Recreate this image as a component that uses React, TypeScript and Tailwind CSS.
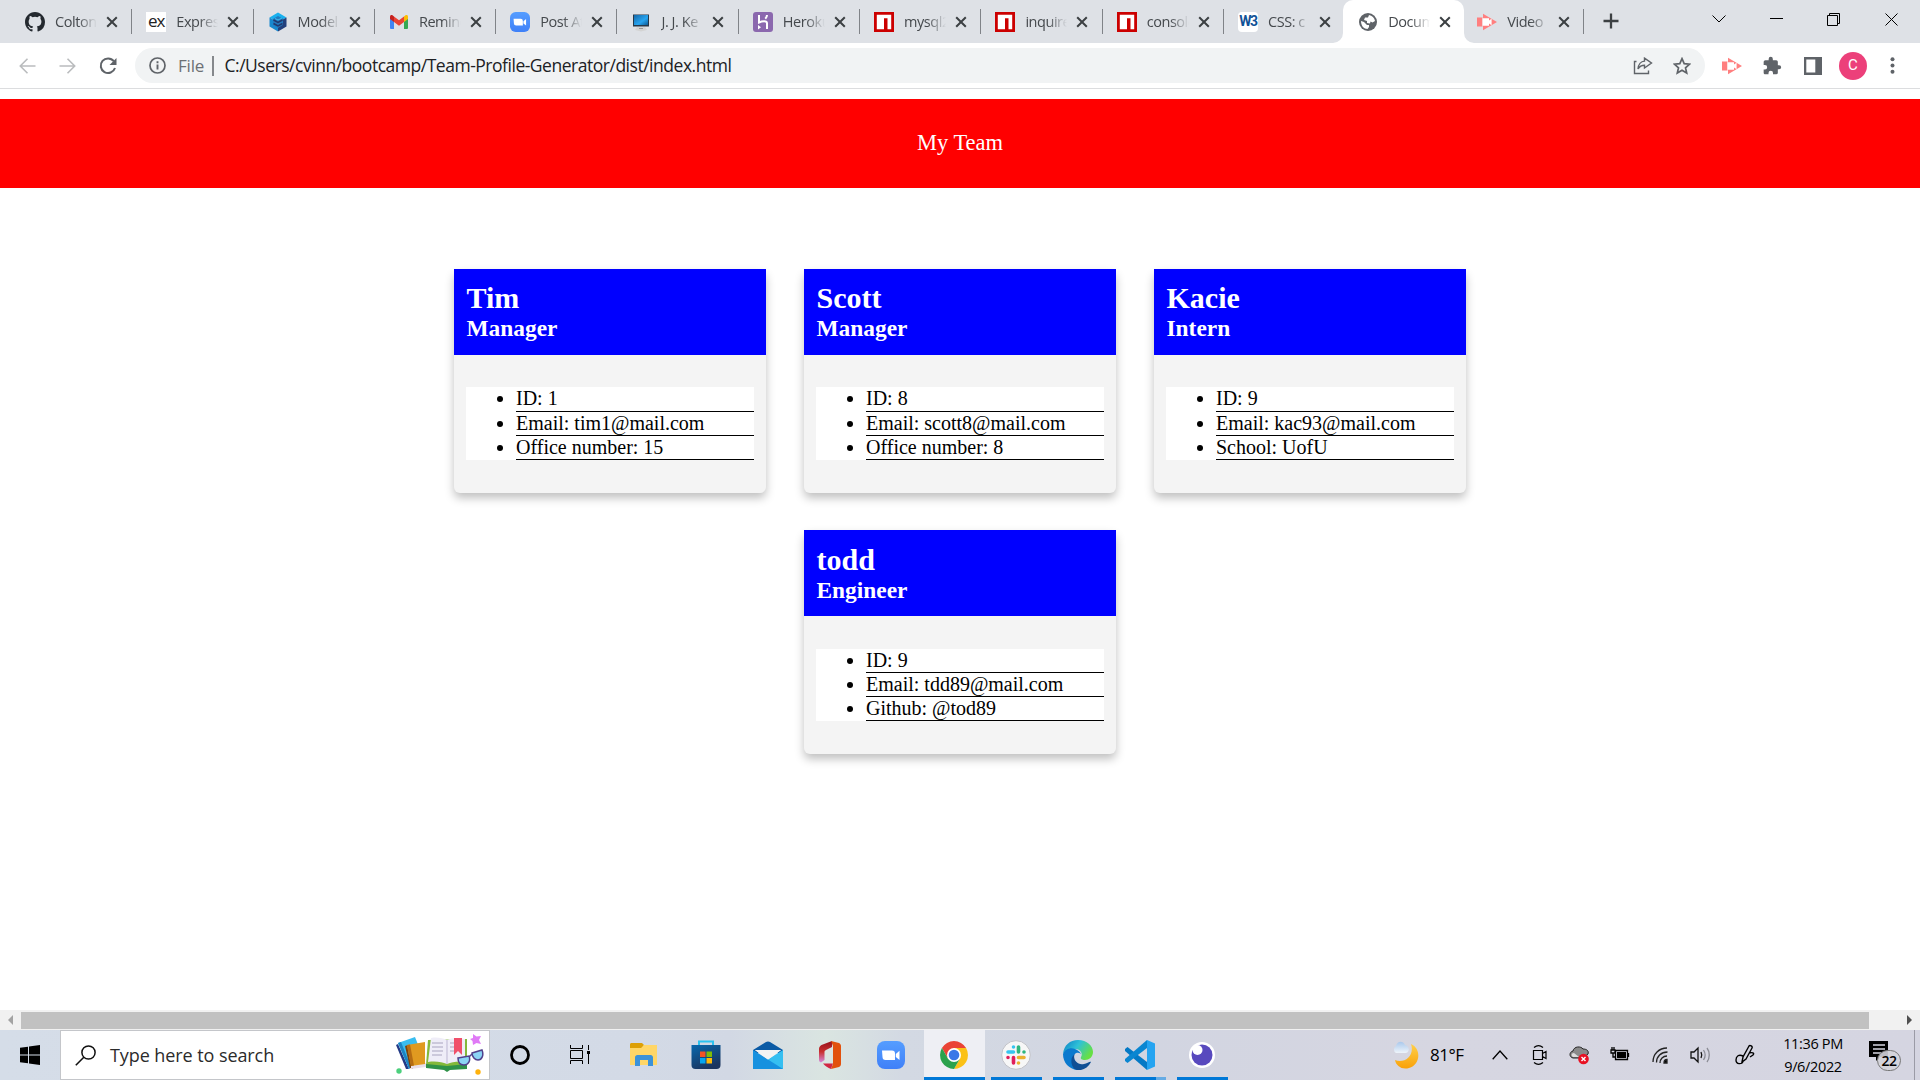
import React from "react";

const NpmIcon = () => (
  <svg width="20" height="20" viewBox="0 0 20 20"><path fill="#c00" d="M0 0h20v20H0z" /><path fill="#fff" d="M2.800 2.800h14.400v14.400h-3.700V6.300H10v10.900H2.800z" /></svg>
);
const ZoomIcon = ({ size }: { size: number }) => (
  <svg width={size} height={size} viewBox="0 0 28 28">
    <defs><linearGradient id="zm" x1="0" y1="0" x2="0" y2="1"><stop stopColor="#559dff" /><stop offset="1" stopColor="#3f80f8" /></linearGradient></defs>
    <rect width="28" height="28" rx="8" fill="url(#zm)" />
    <path fill="#fff" d="M5 9.500h10a3 3 0 0 1 3 3v6.500H8.500a3 3 0 0 1-3-3zM18.800 13l3.700-3.200v9.200l-3.700-3z" />
  </svg>
);
const CastifyIcon = () => (
  <svg width="20" height="18" viewBox="0 0 20 18">
    <path fill="#ff7f7f" d="M0 4.500h5.500v9H0zM6 .8l14 8.200-14 8.200z" /><path fill="#fff" d="M5.500 5.200H12v2.300l2.600-1.800v6.600L12 10.500v2.300H5.500z" />
  </svg>
);

const tabs: { title: string; icon: React.ReactNode; active?: boolean }[] = [
  { title: "Colton", icon: <svg width="20" height="20" viewBox="0 0 16 16"><path fill="#24292f" d="M8 0C3.580 0 0 3.580 0 8c0 3.540 2.290 6.530 5.470 7.590.4.070.55-.17.55-.38 0-.19-.01-.82-.01-1.490-2.010.37-2.530-.49-2.690-.94-.09-.23-.48-.94-.82-1.130-.28-.15-.68-.52-.01-.53.63-.01 1.080.58 1.230.82.72 1.210 1.870.87 2.330.66.07-.52.28-.87.51-1.070-1.780-.2-3.640-.89-3.640-3.950 0-.87.31-1.590.82-2.150-.08-.2-.36-1.020.08-2.120 0 0 .67-.21 2.200.82a7.600 7.600 0 0 1 4 0c1.530-1.040 2.200-.82 2.200-.82.44 1.100.16 1.920.08 2.120.51.56.82 1.270.82 2.150 0 3.070-1.870 3.750-3.650 3.950.29.25.54.73.54 1.480 0 1.070-.01 1.930-.01 2.200 0 .21.15.46.55.38A8 8 0 0 0 16 8c0-4.420-3.580-8-8-8z" /></svg> },
  { title: "Express", icon: <span className="flex h-5 w-5 items-center justify-center bg-white pb-0.5 text-[17px] tracking-[-1px] text-[#222]">ex</span> },
  { title: "Model ", icon: <svg width="20" height="20" viewBox="0 0 20 20"><path fill="#18b0ee" d="M10 .5l8.500 5L10 10 1.500 5.500z" /><path fill="#1888ce" d="M1.500 5.500L10 10v9.500l-8.500-5z" /><path fill="#23407c" d="M18.500 5.500L10 10v9.500l8.500-5z" /><path fill="#2379bd" d="M10 4l5 2.800v6L10 16l-5-3V7z" /><path fill="none" stroke="#22386e" strokeWidth="1.500" d="M5.500 8l4.500 2.500L14.500 8M5.500 11.500L10 14l4.500-2.500" /><path fill="none" stroke="#3dbdf2" d="M7 6.500l3 1.500 4-2" /></svg> },
  { title: "Remind", icon: <svg width="20" height="20" viewBox="0 0 20 20"><path fill="#4285f4" d="M1 5l4 3v9H2a1 1 0 0 1-1-1z" /><path fill="#34a853" d="M19 5l-4 3v9h3a1 1 0 0 0 1-1z" /><path fill="#fbbc04" d="M15 4.500l1.500-1.200C17.700 2.500 19 3.200 19 4.800V7l-4 3z" /><path fill="#c5221f" d="M5 4.500L3.500 3.300C2.300 2.500 1 3.200 1 4.800V7l4 3z" /><path fill="#ea4335" d="M5 4.500L10 8.300l5-3.800V10l-5 3.800L5 10z" /></svg> },
  { title: "Post At", icon: <ZoomIcon size={20} /> },
  { title: "J. J. Ke", icon: <svg width="20" height="20" viewBox="0 0 20 20"><defs><linearGradient id="mon" x1="0" y1="0" x2="1" y2="1"><stop stopColor="#1568a8" /><stop offset=".6" stopColor="#27a4f0" /><stop offset="1" stopColor="#0c5a95" /></linearGradient></defs><rect x="2" y="2.500" width="16" height="12" fill="#263848" /><path fill="url(#mon)" d="M3 3h14v10H3z" /><path fill="#d4d4d4" d="M6 15h8l2 3-6 1.500L4 18z" /><path fill="#999" d="M8 16h4v1H8z" /></svg> },
  { title: "Heroku", icon: <svg width="20" height="20" viewBox="0 0 20 20"><rect width="20" height="20" rx="3" fill="#8b68ae" /><path fill="none" stroke="#fff" strokeWidth="2" d="M6 3v7.500c3-1.300 8-2 8 .8V17M14 3c0 1.500-.7 2.800-1.700 3.800" /><path fill="#fff" d="M5 13l3 2.300L5 17.500z" /></svg> },
  { title: "mysql2", icon: <NpmIcon /> },
  { title: "inquirer", icon: <NpmIcon /> },
  { title: "console", icon: <NpmIcon /> },
  { title: "CSS: c", icon: <span className="flex h-5 w-5 items-center justify-center rounded-sm bg-white font-['Roboto'] text-[14px] font-bold tracking-[-1.500px] text-[#115297]">W3</span> },
  { title: "Docum", active: true, icon: <svg width="20" height="20" viewBox="0 0 20 20"><circle cx="10" cy="10" r="9" fill="#5f6368" /><path fill="#fff" d="M11 3c3 .5 5.500 3 6 6l-2.500 1.500-2-1-.5 2-3-.5V9l-3-1 1-2.500h3zM3 9l3 1 3 3h2v2l-1.500 2C6 17 3 14 3 9z" /></svg> },
  { title: "Video ", icon: <CastifyIcon /> },
];

const Tab = ({ title, icon, active, bar, last }: { title: string; icon: React.ReactNode; active?: boolean; bar: boolean; last: boolean }) => (
  <div
    className={
      active
        ? "relative -ml-px flex h-[43px] w-[121px] shrink-0 items-center rounded-t-[10px] bg-white pl-[15px]"
        : last
          ? "relative -ml-px flex h-[43px] w-[119.500px] shrink-0 items-center pl-[14px]"
          : "relative flex h-[43px] w-[121.300px] shrink-0 items-center pl-[15px]"
    }
  >
    <span className="flex h-5 w-5 shrink-0 items-center justify-center">{icon}</span>
    <span className="ml-[10px] w-[42px] shrink-0 overflow-hidden whitespace-pre text-[14.500px] tracking-[-0.45px] text-[#45494d] [mask-image:linear-gradient(to_right,black_55%,transparent)]">{title}</span>
    <svg className="ml-[9px] shrink-0" width="12" height="12" viewBox="0 0 12 12"><path d="M1.200 1.200l9.600 9.600M10.800 1.200l-9.600 9.600" stroke="#3c4043" strokeWidth="2" /></svg>
    {bar && <span className="absolute right-[-1px] top-[9px] h-[25px] w-px bg-[#808388]" />}
    {active && (
      <>
        <svg className="absolute bottom-0 -left-[10px]" width="10" height="10"><path d="M10 0v10H0A10 10 0 0 0 10 0" fill="#fff" /></svg>
        <svg className="absolute bottom-0 -right-[10px]" width="10" height="10"><path d="M0 0v10h10A10 10 0 0 1 0 0" fill="#fff" /></svg>
      </>
    )}
  </div>
);

const Card = ({ name, role, items, lower }: { name: string; role: string; items: string[]; lower?: boolean }) => (
  <article className="h-[224px] w-[312px] rounded-[6px] bg-[#f4f4f4] shadow-[0_5px_10px_rgba(0,0,0,0.25)]">
    <header className={"h-[86px] bg-[#0000ff] px-[12.500px] font-bold text-white " + (lower ? "pt-[13px]" : "pt-[12px]")}>
      <h2 className="text-[30px] leading-[34px]">{name}</h2>
      <h3 className="text-[23.400px] leading-[27px]">{role}</h3>
    </header>
    <ul className={"mx-3 list-disc bg-white pl-[50px] text-[20px] leading-[23px] text-black " + (lower ? "mt-[33px]" : "mt-8")}>
      {items.map((t) => <li key={t} className={lower ? "border-b border-black" : "border-b border-black first:pb-px"}>{t}</li>)}
    </ul>
  </article>
);

const TaskItem = ({ children, w, line }: { children: React.ReactNode; w: string; line?: React.ReactNode }) => (
  <div className={"relative flex h-[50px] shrink-0 items-center justify-center " + w}>{children}{line}</div>
);
const Line = () => <span className="absolute bottom-0 left-[5px] h-[3px] w-[51px] bg-[#0078d7]" />;

export default function App() {
  return (
    <div className="flex h-[1080px] w-[1920px] flex-col overflow-hidden bg-white font-['Open_Sans',sans-serif]">
      <div className="flex h-[43px] shrink-0 bg-[#dee1e6] pl-[10px]">
        {tabs.map((t, i) => <Tab key={i} {...t} bar={i !== 10 && i !== 11} last={i === 12} />)}
        <svg className="ml-[20px] mt-[13px]" width="16" height="16" viewBox="0 0 16 16"><path d="M8 .5v15M.5 8h15" stroke="#3c4043" strokeWidth="2.300" /></svg>
        <div className="ml-auto flex h-[38px] items-center pr-[22px] text-black">
          <svg className="mr-[44px]" width="14" height="8" viewBox="0 0 14 8"><path d="M.5.500L7 7 13.500.500" fill="none" stroke="currentColor" /></svg>
          <svg className="mr-[44px]" width="13" height="2"><path d="M0 .5h13" stroke="currentColor" /></svg>
          <svg className="mr-[45px]" width="13" height="13" viewBox="0 0 13 13"><path d="M.5 2.500h10v10H.5zM2.500 2.500v-2h10v10h-2" fill="none" stroke="currentColor" /></svg>
          <svg width="13" height="13" viewBox="0 0 13 13"><path d="M.5.500l12 12M12.500.500l-12 12" stroke="currentColor" /></svg>
        </div>
      </div>

      <div className="flex h-[46px] shrink-0 items-center border-b border-[#dcdddf] pl-[19px]">
        <svg width="17" height="16" viewBox="0 0 17 16"><path d="M16.500 8H1.500M8.500.8L1.300 8l7.200 7.200" fill="none" stroke="#babcbe" strokeWidth="1.600" /></svg>
        <svg className="ml-[23px]" width="17" height="16" viewBox="0 0 17 16"><path d="M.5 8h15M8.500.8L15.700 8l-7.200 7.200" fill="none" stroke="#babcbe" strokeWidth="1.600" /></svg>
        <svg className="ml-[23px]" width="18" height="18" viewBox="0 0 18 18"><path d="M14.800 4.200A7.300 7.300 0 1 0 16 11" fill="none" stroke="#5f6368" strokeWidth="2" /><path d="M17.500 1v7h-7z" fill="#5f6368" /></svg>
        <div className="ml-[18px] flex h-[35px] w-[1570px] items-center rounded-full bg-[#f1f3f4] pl-[14px]">
          <svg width="17" height="17" viewBox="0 0 17 17"><circle cx="8.500" cy="8.500" r="7.500" fill="none" stroke="#5f6368" strokeWidth="1.700" /><path d="M8.500 7.500v5M8.500 4.300v2" stroke="#5f6368" strokeWidth="1.900" /></svg>
          <span className="ml-[12px] w-[34px] whitespace-nowrap text-[17px] tracking-[-0.2px] text-[#6c7074]">File</span>
          <span className="h-5 w-[1.500px] bg-[#85888c]" />
          <span className="ml-[11px] whitespace-nowrap text-[17.500px] tracking-[-0.48px] text-[#202124]">C:/Users/cvinn/bootcamp/Team-Profile-Generator/dist/index.html</span>
          <svg className="ml-auto" width="20" height="18" viewBox="0 0 20 18"><path d="M3.500 4.500H1.500v12h14v-3M11.500 1.200L18.500 6l-7 5V8.200C8.500 8.200 6.500 9.500 5 12c.3-4.500 3-7.700 6.500-7.900z" fill="none" stroke="#5f6368" strokeWidth="1.400" /></svg>
          <svg className="ml-[20px] mr-[14px]" width="18" height="18" viewBox="0 0 18 18"><path d="M9 1.700l2.200 5 5.400.5-4.100 3.600 1.200 5.300L9 13.300l-4.700 2.800 1.200-5.300L1.400 7.200l5.400-.5z" fill="none" stroke="#5f6368" strokeWidth="1.700" /></svg>
        </div>
        <div className="ml-[17px] flex items-center">
          <CastifyIcon />
          <svg className="ml-[20px]" width="20" height="20" viewBox="0 0 24 24"><path fill="#5f6368" d="M20.500 11H19V7a2 2 0 0 0-2-2h-4V3.500a2.500 2.500 0 0 0-5 0V5H4a2 2 0 0 0-2 2v3.800h1.500a2.700 2.700 0 0 1 0 5.400H2V20c0 1.100.9 2 2 2h3.800v-1.500a2.700 2.700 0 0 1 5.400 0V22H17a2 2 0 0 0 2-2v-4h1.500a2.500 2.500 0 0 0 0-5z" /></svg>
          <svg className="ml-[22px]" width="18" height="18" viewBox="0 0 18 18"><path fill="#5f6368" d="M0 0h18v18H0z" /><path fill="#fff" d="M2.300 2.500h9v13h-9z" /></svg>
          <span className="ml-[17px] flex h-7 w-7 items-center justify-center rounded-full bg-[#ec407a] font-['Roboto'] text-[15px] text-white">C</span>
          <svg className="ml-[23px]" width="5" height="17" viewBox="0 0 5 17"><g fill="#5f6368"><circle cx="2.500" cy="2.200" r="2" /><circle cx="2.500" cy="8.500" r="2" /><circle cx="2.500" cy="14.800" r="2" /></g></svg>
        </div>
      </div>

      <main className="min-h-0 flex-1 pt-[10px] font-['Liberation_Serif',serif]">
        <div className="flex h-[89px] items-center justify-center bg-[#ff0000] pb-[2px] text-[22.500px] text-white">My Team</div>
        <div className="mx-auto mt-[81px] flex w-[1012px] flex-wrap justify-center gap-x-[38px] gap-y-[37px]">
          <Card name="Tim" role="Manager" items={["ID: 1", "Email: tim1@mail.com", "Office number: 15"]} />
          <Card name="Scott" role="Manager" items={["ID: 8", "Email: scott8@mail.com", "Office number: 8"]} />
          <Card name="Kacie" role="Intern" items={["ID: 9", "Email: kac93@mail.com", "School: UofU"]} />
          <Card name="todd" role="Engineer" items={["ID: 9", "Email: tdd89@mail.com", "Github: @tod89"]} lower />
        </div>
      </main>

      <div className="flex h-5 shrink-0 items-center bg-[#f1f1f1] pl-2">
        <svg width="5" height="10"><path d="M5 0v10L0 5z" fill="#a3a3a3" /></svg>
        <div className="ml-2 h-[17px] w-[1848px] bg-[#c1c1c1]" />
        <svg className="ml-auto mr-[8px]" width="5" height="10"><path d="M0 0v10l5-5z" fill="#505050" /></svg>
      </div>

      <footer className="flex h-[50px] shrink-0 items-center bg-[linear-gradient(90deg,#d5dde8_0%,#d3dae6_33%,#d2d8e4_38%,#dae5e1_43%,#d3d9e3_47%,#d2d5e1_60%,#d6d6e1_75%,#d5d5e1_100%)] text-black">
        <div className="flex w-[60px] justify-center">
          <svg width="20" height="20" viewBox="0 0 20 20"><path d="M0 2.800l8-1.100v7.800H0zM9 1.500L20 0v9.500H9zM0 10.500h8v7.800l-8-1.100zM9 10.500h11V20L9 18.500z" /></svg>
        </div>
        <div className="flex h-[50px] w-[430px] items-center border border-[#c4c6ca] bg-white pl-[14px]">
          <svg width="21" height="21" viewBox="0 0 21 21"><circle cx="13.500" cy="7.500" r="6.600" fill="none" stroke="#111" strokeWidth="1.500" /><path d="M8.800 12.200L.8 20.200" stroke="#111" strokeWidth="1.600" /></svg>
          <span className="ml-[14px] whitespace-nowrap text-[18px] tracking-[-0.080px] text-[#2b2b2b]">Type here to search</span>
          <svg className="ml-auto mr-[5px]" width="88" height="42" viewBox="0 0 88 42">
            <path fill="#223a86" d="M0 11l2-1 11 25-3 0z" /><path fill="#39bdf0" d="M2 9L19 3l6 15-12 17z" /><path fill="#1c84c4" d="M2 9l3-1 10 25-2 2z" />
            <path fill="#7a4410" d="M9 12l3-1 5 24-3-1z" /><path fill="#e9dfe8" d="M15 32l15-3v4l-15 2z" /><path fill="#e09a20" d="M11 11l18-3v22l-14 2z" /><path fill="#b56c12" d="M11 11l3-.5 4 21-3 .5z" />
            <path fill="#84b93a" d="M32 6l39-1v26l-21 4-20-4z" /><path fill="#2f9248" d="M30 30l21 2 20-2v5l-17 1-3 2-3-2-18-2z" />
            <path fill="#efedf8" d="M35 4c6-1 12 0 16 2 4-2 11-3 18-1v23c-7-1-13 0-18 2-5-2-11-3-19-2z" /><path stroke="#c4bfd9" strokeWidth="1.200" d="M51 6v24" /><path stroke="#a9a4bf" fill="none" d="M36 9h11M36 13h11M36 17h11M36 21h10M54 9h5M54 13h5M54 17h5" />
            <path fill="#f0506a" d="M58 4h8v17l-4-4-4 4z" />
            <g fill="#8bd4f5" stroke="#51418c" strokeWidth="1.500"><path d="M62 24l11-2c2 5-1 9-5 9-4 0-6-3-6-7zM76 19l10-3c2 5 0 10-4 10-3 0-6-3-6-7z" /></g><path d="M73 23l3-3" stroke="#51418c" strokeWidth="1.500" />
            <path fill="#e07af6" d="M77 0l3.500 2.500L85 2l-2 4 2 4-4.500-1L77 11l-.5-4L74 5l3-1z" /><circle cx="3" cy="37" r="2.700" fill="#4cd07d" /><circle cx="82" cy="38" r="2.700" fill="#ffb20c" />
          </svg>
        </div>
        <TaskItem w="w-[60px]"><svg width="20" height="20"><circle cx="10" cy="10" r="8.500" fill="none" stroke="#000" strokeWidth="2.800" /></svg></TaskItem>
        <TaskItem w="w-[60px]"><svg width="20" height="20" viewBox="0 0 20 20" fill="none" stroke="#000"><path d="M.5 0v3.500h12V0M.5 19v-3.500h12V19M.5 5.500h12v8H.5zM18.500 0v5M18.500 9v10" /><path d="M17 6h3v3h-3z" fill="#000" stroke="none" /></svg></TaskItem>
        <TaskItem w="w-[67px]"><svg width="28" height="24" viewBox="0 0 28 24"><path fill="#dda006" d="M0 1.500C0 .6.600 0 1.500 0H12l2 2-2 3H0z" /><path fill="#ffd667" d="M0 5h11l3-3h13v20H0z" /><path fill="#3c92d8" d="M5 14.500c0-1.500 1-2.500 2.500-2.500h13c1.500 0 2.500 1 2.500 2.500V23h-5v-6h-8v6H5z" /></svg></TaskItem>
        <TaskItem w="w-[57px]"><svg width="30" height="30" viewBox="0 0 30 30"><defs><linearGradient id="st" x1="0" y1="0" x2=".5" y2="1"><stop stopColor="#0868ad" /><stop offset="1" stopColor="#1b355f" /></linearGradient></defs><path d="M8 5V1.500h14V5" fill="none" stroke="#2bc2ef" strokeWidth="2" /><path fill="url(#st)" d="M.5 5h29v20a4 4 0 0 1-4 4h-21a4 4 0 0 1-4-4z" /><path fill="#f35325" d="M9 11.500h5.500V17H9z" /><path fill="#81bc06" d="M15.500 11.500H21V17h-5.500z" /><path fill="#05a6f0" d="M9 18h5.500v5.500H9z" /><path fill="#ffba08" d="M15.500 18H21v5.500h-5.500z" /></svg></TaskItem>
        <TaskItem w="w-[68px]"><svg width="30" height="28" viewBox="0 0 30 28"><path fill="#0a5aa5" d="M0 9L13 1c1-.7 3-.7 4 0l13 8v3H0z" /><path fill="#f3f3f3" d="M2 9h26L15 19z" /><path fill="#35bff1" d="M30 9v19H15l-4-7z" /><path fill="#1791df" d="M0 9l30 19H0z" /><path fill="#f3f3f3" d="M2 9h26L15 18.500z" /></svg></TaskItem>
        <TaskItem w="w-[55px]"><svg width="24" height="28" viewBox="0 0 24 28"><defs><linearGradient id="of" x1="0" y1="0" x2="0" y2="1"><stop stopColor="#96101a" /><stop offset=".5" stopColor="#c9302f" /><stop offset="1" stopColor="#d58be0" /></linearGradient></defs><path fill="url(#of)" d="M1 8c0-2 1-3 2.500-4L14 0v6L8 9c-1 .5-1.500 1-1.500 2v8L3 21.500c-1.500-.5-2-1.500-2-3z" /><path fill="#e2510c" d="M13 0l8 2c1 .5 2 1.500 2 3v18c0 1.500-1 2.500-2 3l-8 2 2-5V5z" /><path fill="#d12744" d="M5 22.500h10L13 28c-3-1-6-3-8-5.500z" /></svg></TaskItem>
        <TaskItem w="w-[67px]"><ZoomIcon size={28} /></TaskItem>
        <TaskItem w="w-[61px] bg-[#eeeff4] pr-[2px]" line={<span className="absolute bottom-0 left-0 h-[3px] w-[61px] bg-[#0078d7]" />}>
          <svg width="28" height="28" viewBox="0 0 28 28"><path fill="#ea4335" d="M1.900 7A14 14 0 0 1 26.100 7H14L8 17.500z" /><path fill="#fbc116" d="M26.100 7A14 14 0 0 1 14 28l6-10.500L14 7z" /><path fill="#2ba24c" d="M1.900 7A14 14 0 0 0 14 28l6-10.500H8z" /><circle cx="14" cy="14" r="7" fill="#fff" /><circle cx="14" cy="14" r="5.300" fill="#3b78e7" /></svg>
        </TaskItem>
        <TaskItem w="w-[62px] ml-px pr-[2px]" line={<Line />}>
          <svg width="30" height="30" viewBox="0 0 30 30"><circle cx="15" cy="15" r="14.300" fill="#f7f7f7" stroke="#c2c3c9" /><g fill="none" strokeLinecap="round" strokeWidth="3.600"><path stroke="#36c5f0" d="M12.500 7v0M12.500 12H7" /><path stroke="#2eb67d" d="M17.500 7v5M23 12v0" /><path stroke="#ecb22e" d="M23 17.500h-5.500M17.500 23v0" /><path stroke="#e01e5a" d="M12.500 17.500V23M7 17.500v0" /></g></svg>
        </TaskItem>
        <TaskItem w="w-[62px] pr-[2px]" line={<Line />}>
          <svg width="30" height="30" viewBox="0 0 30 30"><defs><linearGradient id="ed" x1="0" y1="0" x2="1" y2=".5"><stop offset=".1" stopColor="#118ac8" /><stop offset=".5" stopColor="#2fc1d8" /><stop offset="1" stopColor="#66e044" /></linearGradient></defs><path fill="url(#ed)" d="M0 14C1 5 7 0 15 0c9 0 15 6 15 12 0 5-4 8-8 8-3 0-5-1-4-3 2-3 0-8-6-8C7 9 1 11 0 14z" /><path fill="#0a79ce" d="M0 14C2 9 8 7 12 9c3 1 5 3 6 5-4-3-8 0-8 5 0 6 4 10 8 11C8 31 0 24 0 14z" /><path fill="#104f95" d="M12 14c-3 4 2 12 9 10 3 0 6-3 7-2-3 6-9 9-14 8-6-1-8-13-2-16z" /></svg>
        </TaskItem>
        <TaskItem w="w-[62px] pr-[2px]" line={<><span className="absolute bottom-0 left-[5px] h-[3px] w-[41px] bg-[#0078d7]" /><span className="absolute bottom-0 left-[46px] h-[3px] w-[10px] bg-[#66abe4]" /></>}>
          <svg width="30" height="30" viewBox="0 0 30 30"><path fill="#0479c5" d="M0 9l2.500-2L22 22v8L0 11z" /><path fill="#0a86d1" d="M0 21l2.500 2L22 8V0L0 19z" /><path fill="#25a4f1" d="M22 0l8 3.500v23L22 30z" /></svg>
        </TaskItem>
        <TaskItem w="w-[62px] pr-[2px]" line={<Line />}>
          <svg width="26" height="26" viewBox="0 0 26 26"><circle cx="13" cy="13" r="13" fill="#fff" /><circle cx="13" cy="13" r="10.500" fill="#5849be" /><circle cx="8.500" cy="8" r="5" fill="#fff" /></svg>
        </TaskItem>
        <div className="ml-auto flex h-[50px] items-center">
          <svg className="shrink-0" width="27" height="28" viewBox="0 0 27 28"><defs><linearGradient id="mn" x1="0" y1="0" x2="0" y2="1"><stop stopColor="#ffd04b" /><stop offset="1" stopColor="#f9a109" /></linearGradient><linearGradient id="cl" x1="0" y1="0" x2="0" y2="1"><stop stopColor="#a9c8ec" /><stop offset="1" stopColor="#eef4fa" /></linearGradient></defs><path fill="url(#mn)" d="M19 3c11 5 9 21-2 24C10 29 4 25 3 19c9 4 20-4 16-16z" /><path fill="url(#cl)" d="M4 12a4 4 0 0 1 0-7C5 0 11-1 13 4c5 1 5 8 0 8z" /></svg>
          <span className="ml-[11px] w-[36px] whitespace-nowrap text-[17px] tracking-[-0.5px]">81°F</span>
          <svg className="ml-[26px]" width="16" height="10"><path d="M.7 9.200L8 1l7.300 8.200" fill="none" stroke="#000" strokeWidth="1.300" /></svg>
          <svg className="ml-[24px]" width="16" height="20" viewBox="0 0 16 20" fill="none" stroke="#000" strokeWidth="1.200"><path d="M1.500 5.500h9v9h-9zM10.500 8.500L14 6.500v7l-3.500-2M2 2.500c3-2.500 6-2.500 9 0M2 17.500c3 2.500 6 2.500 9 0" /></svg>
          <svg className="ml-[20px]" width="22" height="20" viewBox="0 0 22 20"><path fill="#8a8a8a" stroke="#222" d="M5 13c-4-1-4-6 0-7 1-5 8-5 10-2 4 0 6 2 5 5l-5 4z" /><path fill="#ddd" d="M5 12c-2-1-2-4 1-4l5 4z" /><circle cx="15.500" cy="14" r="5.300" fill="#e81123" /><path d="M13.500 12l4 4M17.500 12l-4 4" stroke="#fff" strokeWidth="1.400" /></svg>
          <svg className="ml-[20px]" width="21" height="16" viewBox="0 0 21 16"><path d="M1 3h4v3H1zM2 3V0M4 3V0M3 6v4h3M5.500 3.500h12v9h-12zM18.500 6v4" fill="none" stroke="#000" strokeWidth="1.300" /><path d="M7 5h9v6H7z" /></svg>
          <svg className="ml-[21px]" width="17" height="17" viewBox="0 0 17 17" fill="none" stroke="#222" strokeWidth="1.300"><path d="M1 15C1 7 7 1 15 1M4.500 15.500C4.500 9.500 9 5 15.500 5M8 16c0-4 3-7 7-7" /><path d="M12 16c0-2 1-3.500 3-3.500V16z" fill="#000" /></svg>
          <svg className="ml-[21px]" width="21" height="18" viewBox="0 0 21 18" fill="none" stroke="#111" strokeWidth="1.300"><path d="M1 6h3l4-4v14l-4-4H1zM11 6c1 2 1 4 0 6" /><path d="M13.500 4c2 3 2 7 0 10M17 2c3 4 3 10 0 14" stroke="#8b8c95" /></svg>
          <svg className="ml-[24px]" width="20" height="22" viewBox="0 0 20 22" fill="none" stroke="#000" strokeWidth="1.400"><path d="M7 18l1-5 6-11c1-1.500 4 .5 3 2l-6 11zM8 12c-4-2-7 0-7 4 0 5 6 4 7 2M14 9c3-1 6 0 4 2l-3 2" /></svg>
          <div className="ml-[21px] w-[74px] whitespace-nowrap text-center text-[14.500px] leading-[23px] tracking-[-0.35px]"><div>11:36 PM</div><div>9/6/2022</div></div>
          <div className="relative ml-[19px] mr-[13px] h-[30px] w-[32px]">
            <svg width="20" height="21" viewBox="0 0 20 21"><path d="M0 1h19v16h-8l-4 4v-4H0z" /><path d="M4 5h12M4 9h12M4 13h8" stroke="#d6d6e1" strokeWidth="1.300" /></svg>
            <span className="absolute left-[8px] top-[10px] flex h-[21px] w-[24px] items-center justify-center rounded-full border border-[#777] bg-[#d4d4da]/90 text-[14px] font-semibold tracking-[-0.5px]">22</span>
          </div>
          <span className="h-[50px] w-[6px] border-l border-[#9b9ba6]" />
        </div>
      </footer>
    </div>
  );
}
